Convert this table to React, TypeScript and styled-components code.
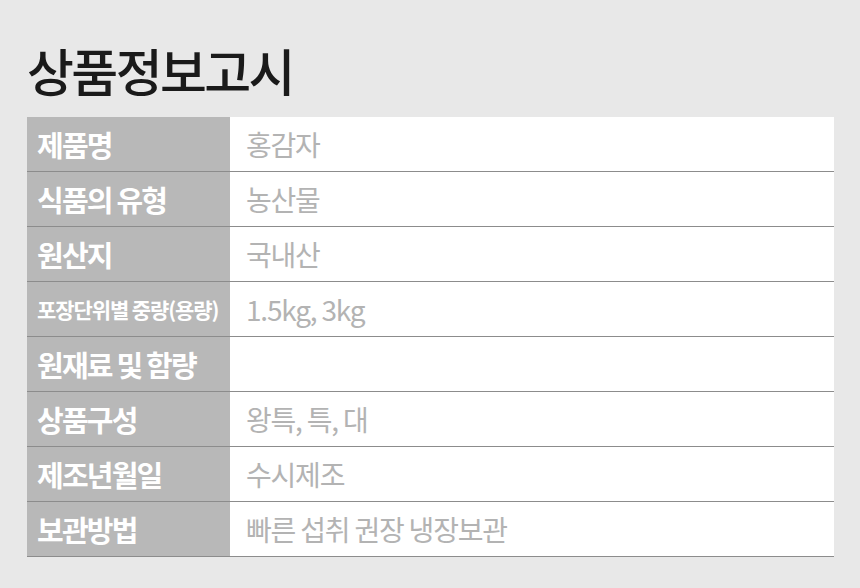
import styled, { createGlobalStyle } from "styled-components";

const GlobalStyle = createGlobalStyle`
  html, body {
    margin: 0;
    padding: 0;
    background: #e8e8e8;
  }
  body {
    font-family: "Noto Sans CJK KR", "Noto Sans", sans-serif;
  }
`;

const Page = styled.div`
  width: 860px;
  height: 588px;
  padding: 34px 26px 0 27px;
  box-sizing: border-box;
`;

const Title = styled.h1`
  margin: 0 0 11px 0;
  font-size: 51px;
  line-height: 72px;
  font-weight: 500;
  letter-spacing: -2.6px;
  color: #1a1a1a;
`;

const Table = styled.div`
  display: grid;
  grid-template-columns: 203px 1fr;
  width: 807px;
`;

const Cell = styled.div`
  height: 55px;
  box-sizing: border-box;
  border-bottom: 1.5px solid #8c8c8c;
  display: flex;
  align-items: center;
  white-space: nowrap;
`;

const Label = styled(Cell)<{ $small?: boolean }>`
  background: #b8b8b8;
  color: #ffffff;
  padding-left: 10px;
  font-weight: 700;
  font-size: ${(p) => (p.$small ? "21px" : "29px")};
  letter-spacing: ${(p) => (p.$small ? "-1.1px" : "-1.8px")};
`;

const Value = styled(Cell)`
  background: #ffffff;
  color: #b3b3b3;
  padding-left: 16px;
  font-size: 28px;
  font-weight: 400;
  letter-spacing: -1.2px;
`;

const rows: { label: string; value: string; small?: boolean }[] = [
  { label: "제품명", value: "홍감자" },
  { label: "식품의 유형", value: "농산물" },
  { label: "원산지", value: "국내산" },
  { label: "포장단위별 중량(용량)", value: "1.5kg, 3kg", small: true },
  { label: "원재료 및 함량", value: "" },
  { label: "상품구성", value: "왕특, 특, 대" },
  { label: "제조년월일", value: "수시제조" },
  { label: "보관방법", value: "빠른 섭취 권장 냉장보관" },
];

const App = () => {
  return (
    <Page>
      <GlobalStyle />
      <Title>상품정보고시</Title>
      <Table>
        {rows.map((r) => [
          <Label key={r.label + "-l"} $small={r.small}>{r.label}</Label>,
          <Value key={r.label + "-v"}>{r.value}</Value>,
        ])}
      </Table>
    </Page>
  );
};

export default App;
